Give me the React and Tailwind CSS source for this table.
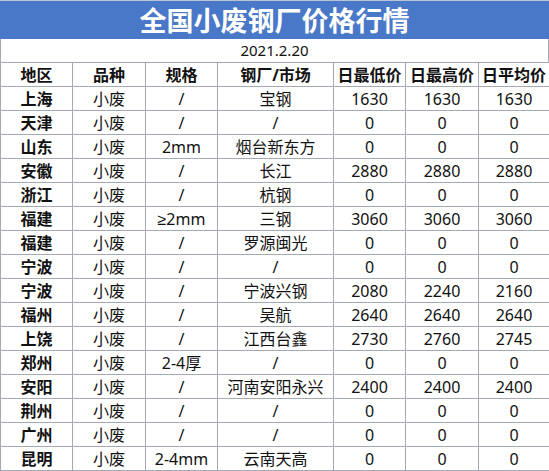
import React from "react";

const rows = [
  ["上海", "小废", "/", "宝钢", "1630", "1630", "1630"],
  ["天津", "小废", "/", "/", "0", "0", "0"],
  ["山东", "小废", "2mm", "烟台新东方", "0", "0", "0"],
  ["安徽", "小废", "/", "长江", "2880", "2880", "2880"],
  ["浙江", "小废", "/", "杭钢", "0", "0", "0"],
  ["福建", "小废", "≥2mm", "三钢", "3060", "3060", "3060"],
  ["福建", "小废", "/", "罗源闽光", "0", "0", "0"],
  ["宁波", "小废", "/", "/", "0", "0", "0"],
  ["宁波", "小废", "/", "宁波兴钢", "2080", "2240", "2160"],
  ["福州", "小废", "/", "吴航", "2640", "2640", "2640"],
  ["上饶", "小废", "/", "江西台鑫", "2730", "2760", "2745"],
  ["郑州", "小废", "2-4厚", "/", "0", "0", "0"],
  ["安阳", "小废", "/", "河南安阳永兴", "2400", "2400", "2400"],
  ["荆州", "小废", "/", "/", "0", "0", "0"],
  ["广州", "小废", "/", "/", "0", "0", "0"],
  ["昆明", "小废", "2-4mm", "云南天高", "0", "0", "0"],
];

const header = ["地区", "品种", "规格", "钢厂/市场", "日最低价", "日最高价", "日平均价"];

const font = { fontFamily: '"Noto Sans", "Liberation Sans", "Noto Sans CJK SC", sans-serif' };

export default function App() {
  return (
    <div className="w-[549px] h-[471px] bg-white overflow-hidden text-[#111]" style={font}>
      <div className="h-[39px] bg-[#4a78c8] border-t border-[#b9c4d6] flex items-center justify-center text-white font-bold text-[27px] leading-none">
        全国小废钢厂价格行情
      </div>
      <div className="h-[24px] border-l border-r border-b border-[#a3aab5] flex items-center justify-center text-[15px] leading-none">
        2021.2.20
      </div>
      <div className="grid grid-cols-[72px_73px_72px_116px_72px_73px_71px] border-l border-[#a3aab5]">
        {header.map((h, i) => (
          <div
            key={"h" + i}
            className="h-[24px] border-r border-b border-[#a3aab5] flex items-center justify-center font-bold text-[16px] leading-none"
          >
            {h}
          </div>
        ))}
        {rows.map((r, ri) =>
          r.map((c, ci) => (
            <div
              key={ri + "-" + ci}
              className={
                "h-[24px] border-r border-b border-[#a3aab5] flex items-center justify-center leading-none " +
                (ci === 0 ? "font-bold text-[16px]" : "text-[16px]")
              }
            >
              {c}
            </div>
          ))
        )}
      </div>
    </div>
  );
}
